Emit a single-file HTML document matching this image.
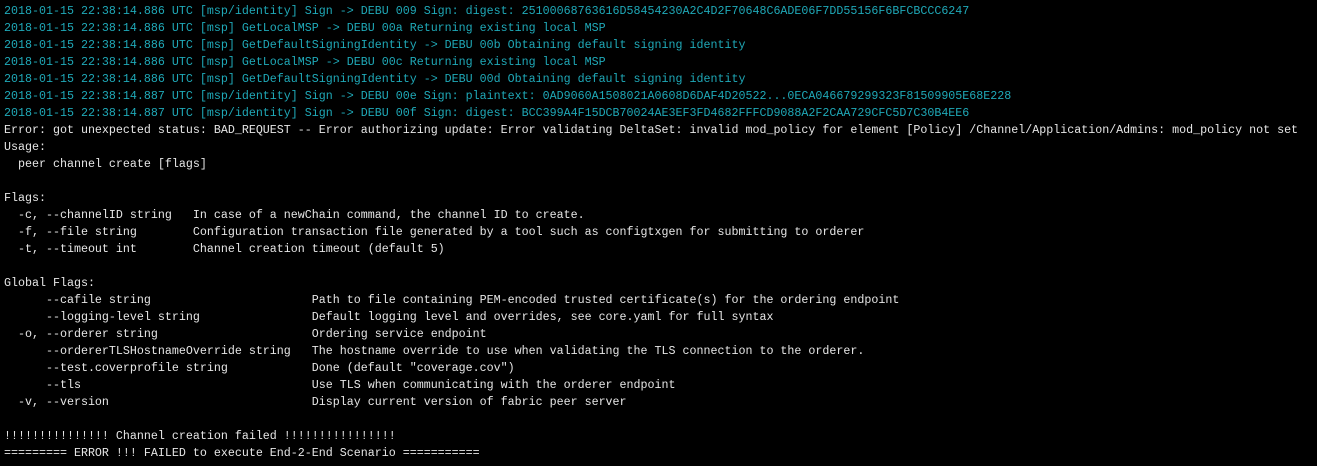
<!DOCTYPE html>
<html><head><meta charset="utf-8"><style>
html,body{margin:0;padding:0;background:#000;width:1317px;height:466px;overflow:hidden}
pre{margin:0;position:absolute;left:4px;top:3px;font-family:"Liberation Mono",monospace;font-size:11.67px;line-height:17px;color:#e6e6e6;white-space:pre}
.c{color:#1fa9b8}
</style></head><body><pre><span class="c">2018-01-15 22:38:14.886 UTC [msp/identity] Sign -> DEBU 009 Sign: digest: 25100068763616D58454230A2C4D2F70648C6ADE06F7DD55156F6BFCBCCC6247</span>
<span class="c">2018-01-15 22:38:14.886 UTC [msp] GetLocalMSP -> DEBU 00a Returning existing local MSP</span>
<span class="c">2018-01-15 22:38:14.886 UTC [msp] GetDefaultSigningIdentity -> DEBU 00b Obtaining default signing identity</span>
<span class="c">2018-01-15 22:38:14.886 UTC [msp] GetLocalMSP -> DEBU 00c Returning existing local MSP</span>
<span class="c">2018-01-15 22:38:14.886 UTC [msp] GetDefaultSigningIdentity -> DEBU 00d Obtaining default signing identity</span>
<span class="c">2018-01-15 22:38:14.887 UTC [msp/identity] Sign -> DEBU 00e Sign: plaintext: 0AD9060A1508021A0608D6DAF4D20522...0ECA046679299323F81509905E68E228</span>
<span class="c">2018-01-15 22:38:14.887 UTC [msp/identity] Sign -> DEBU 00f Sign: digest: BCC399A4F15DCB70024AE3EF3FD4682FFFCD9088A2F2CAA729CFC5D7C30B4EE6</span>
Error: got unexpected status: BAD_REQUEST -- Error authorizing update: Error validating DeltaSet: invalid mod_policy for element [Policy] /Channel/Application/Admins: mod_policy not set
Usage:
  peer channel create [flags]

Flags:
  -c, --channelID string   In case of a newChain command, the channel ID to create.
  -f, --file string        Configuration transaction file generated by a tool such as configtxgen for submitting to orderer
  -t, --timeout int        Channel creation timeout (default 5)

Global Flags:
      --cafile string                       Path to file containing PEM-encoded trusted certificate(s) for the ordering endpoint
      --logging-level string                Default logging level and overrides, see core.yaml for full syntax
  -o, --orderer string                      Ordering service endpoint
      --ordererTLSHostnameOverride string   The hostname override to use when validating the TLS connection to the orderer.
      --test.coverprofile string            Done (default "coverage.cov")
      --tls                                 Use TLS when communicating with the orderer endpoint
  -v, --version                             Display current version of fabric peer server

!!!!!!!!!!!!!!! Channel creation failed !!!!!!!!!!!!!!!!
========= ERROR !!! FAILED to execute End-2-End Scenario ===========
</pre></body></html>
